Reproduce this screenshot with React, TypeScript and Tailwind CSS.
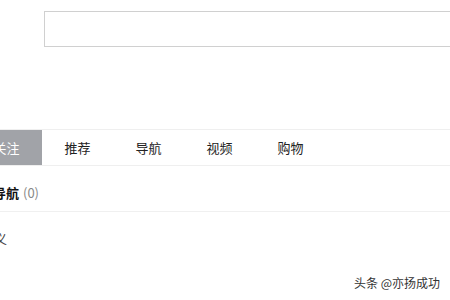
import React from 'react';

const tabs = ['关注', '推荐', '导航', '视频', '购物'];

const App: React.FC = () => {
  return (
    <div
      className="relative w-[450px] h-[300px] overflow-hidden bg-white"
      style={{ fontFamily: '"Noto Sans CJK SC", "Noto Sans", sans-serif' }}
    >
      <div className="-ml-[29px] w-[520px]">
        {/* search box */}
        <div className="pt-[11px] pl-[73px]">
          <div className="h-[36px] border border-[#d0d0d0] bg-white" />
        </div>

        {/* tabs */}
        <div className="mt-[82px] flex border-y border-[#efefef] h-[37px]">
          {tabs.map((t, i) => (
            <div
              key={t}
              className={
                i === 0
                  ? 'w-[71px] flex items-center justify-center bg-[#a1a3a8] text-white text-[13px]'
                  : 'w-[71px] flex items-center justify-center text-[#222] text-[13px]'
              }
            >
              {t}
            </div>
          ))}
        </div>

        {/* section header */}
        <div className="pl-[22px] pt-[8px] h-[46px] flex items-center border-b border-[#f0f0f0]">
          <span className="text-[13px] font-bold text-[#111]">导航</span>
          <span className="ml-[4px] text-[13px] text-[#888]">(0)</span>
        </div>

        <div className="pl-[23px] pt-[20px] text-[13px] text-[#444] leading-none">义</div>
      </div>

      {/* watermark */}
      <div
        className="absolute right-[10px] bottom-[8px] text-[12px] text-[#333]"
        style={{ textShadow: '0 0 2px #fff' }}
      >
        头条 @亦扬成功
      </div>
    </div>
  );
};

export default App;
